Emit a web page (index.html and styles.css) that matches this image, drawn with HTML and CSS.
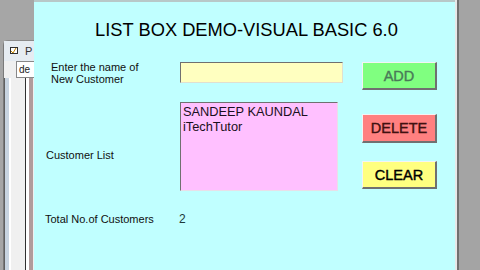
FILE: index.html
```html
<!DOCTYPE html>
<html>
<head>
<meta charset="utf-8">
<link rel="stylesheet" href="styles.css">
</head>
<body>
<div class="screen">
  <div class="left">
    <div class="left-top"></div>
    <div class="win">
      <div class="win-head">
        <svg class="win-icon" width="8" height="8" viewBox="0 0 8 8">
          <rect x="0.5" y="0.5" width="7" height="6" fill="#fff" stroke="#303030" stroke-width="1"/>
          <path d="M1 4 L3 6 L6 1" fill="none" stroke="#c08000" stroke-width="1"/>
        </svg>
        <span class="win-title">P</span>
      </div>
      <div class="win-body">
        <div class="win-input">de</div>
        <div class="win-lines">
          <div class="wl wl1"></div>
          <div class="wl wl2"></div>
          <div class="wl wl3"></div>
          <div class="wl wl4"></div>
        </div>
      </div>
    </div>
  </div>
  <div class="form">
    <div class="title">LIST BOX DEMO-VISUAL BASIC 6.0</div>
    <div class="row row1">
      <div class="label label1">Enter the name of<br>New Customer</div>
      <div class="textbox"></div>
      <div class="btn btn-add">ADD</div>
    </div>
    <div class="row row2">
      <div class="label label2">Customer List</div>
      <div class="listbox">
        <div class="item">SANDEEP KAUNDAL</div>
        <div class="item">iTechTutor</div>
      </div>
      <div class="btncol">
        <div class="btn btn-del">DELETE</div>
        <div class="btn btn-clear">CLEAR</div>
      </div>
    </div>
    <div class="row row3">
      <div class="label label3">Total No.of Customers</div>
      <div class="count">2</div>
    </div>
  </div>
  <div class="right">
    <div class="r-edge"></div>
    <div class="r-dark"></div>
    <div class="r-bg"></div>
  </div>
</div>
</body>
</html>
```
FILE: styles.css
```css
html, body {
  margin: 0;
  padding: 0;
}
body {
  width: 480px;
  height: 270px;
  overflow: hidden;
  background: #a4a4a4;
  font-family: "Liberation Sans", Arial, sans-serif;
}
.screen {
  display: flex;
  width: 480px;
  height: 270px;
}
.left {
  width: 34px;
  display: flex;
  flex-direction: column;
  background: #a6a6a6;
  border-right: 0;
}
.left-top {
  height: 40px;
  flex: none;
}
.win {
  flex: 1;
  margin-left: 3px;
  background: #f0f0f0;
  border-top-left-radius: 5px;
  border-left: 1px solid #7a7a7a;
  border-top: 1px solid #8a8a8a;
  display: flex;
  flex-direction: column;
}
.win-head {
  height: 20px;
  display: flex;
  align-items: center;
  padding-left: 6px;
  gap: 7px;
  background: #e6ecf2;
}
.win-icon {
  display: block;
}
.win-title {
  font-size: 11px;
  color: #333;
}
.win-body {
  flex: 1;
  display: flex;
  flex-direction: column;
}
.win-input {
  margin-left: 12px;
  height: 15px;
  background: #fff;
  border: 1px solid #888;
  border-right: 0;
  font-size: 10px;
  line-height: 15px;
  padding-left: 2px;
  color: #222;
}
.win-lines {
  flex: 1;
  display: flex;
}
.wl {
  height: 100%;
}
.wl1 {
  width: 4px;
  background: #c8d4e0;
  border-left: 1px solid #606060;
}
.wl2 {
  width: 2px;
  background: #fff;
}
.wl3 {
  width: 14px;
  background: #f0f0f0;
  border-right: 1px solid #303030;
}
.wl4 {
  width: 3px;
  background: #fff;
  border-right: 4px solid #b09c9c;
}
.form {
  width: 421px;
  background: #c0ffff;
  border-top: 2px solid #b8c8c8;
  display: flex;
  flex-direction: column;
  box-sizing: border-box;
}
.title {
  font-size: 18.3px;
  text-align: center;
  color: #000;
  height: 20px;
  line-height: 20px;
  margin-top: 18px;
  padding-left: 4px;
}
.row {
  display: flex;
}
.label {
  font-size: 11px;
  line-height: 12px;
  color: #101010;
}
.row1 {
  margin-top: 22px;
  height: 28px;
}
.label1 {
  width: 129px;
  padding-left: 17px;
  margin-top: -1px;
}
.textbox {
  width: 161px;
  height: 19px;
  background: #ffffc0;
  border-top: 1px solid #707070;
  border-left: 1px solid #707070;
  border-right: 1px solid #e0e0d0;
  border-bottom: 1px solid #e0e0d0;
}
.btn {
  width: 73px;
  box-sizing: border-box;
  display: flex;
  align-items: center;
  justify-content: center;
  font-size: 14.5px;
  -webkit-text-stroke: 0.4px currentColor;
  border-top: 1px solid #f4f4f4;
  border-left: 1px solid #f4f4f4;
  border-right: 2px solid #707070;
  border-bottom: 2px solid #707070;
}
.btn-add {
  margin-left: 19px;
  width: 75px;
  height: 28px;
  background: #80ff80;
  color: #4a7a58;
  padding-top: 1px;
}
.row2 {
  margin-top: 12px;
  height: 89px;
}
.label2 {
  width: 134px;
  padding-left: 12px;
  padding-top: 47px;
}
.listbox {
  width: 154px;
  height: 87px;
  background: #ffc0ff;
  border-top: 1px solid #707070;
  border-left: 1px solid #707070;
  border-right: 1px solid #e8e0e8;
  border-bottom: 1px solid #e8e0e8;
  padding-left: 2px;
  box-sizing: content-box;
}
.item {
  font-size: 12.8px;
  line-height: 15px;
  color: #1a1020;
}
.item:first-child {
  margin-top: 1px;
}
.btncol {
  margin-left: 24px;
  display: flex;
  flex-direction: column;
  padding-top: 12px;
  gap: 18px;
}
.btn-del {
  width: 75px;
  height: 29px;
  background: #ff8080;
  color: #401010;
}
.btn-clear {
  width: 75px;
  height: 28px;
  background: #ffff80;
  color: #000;
}
.row3 {
  margin-top: 22px;
}
.label3 {
  width: 134px;
  padding-left: 11px;
}
.count {
  font-size: 12px;
  line-height: 12px;
  color: #203838;
}
.right {
  flex: 1;
  display: flex;
}
.r-edge {
  width: 2px;
  background: #e8e8e8;
}
.r-dark {
  width: 2px;
  background: #707070;
}
.r-bg {
  flex: 1;
  background: #a4a4a4;
}
```
